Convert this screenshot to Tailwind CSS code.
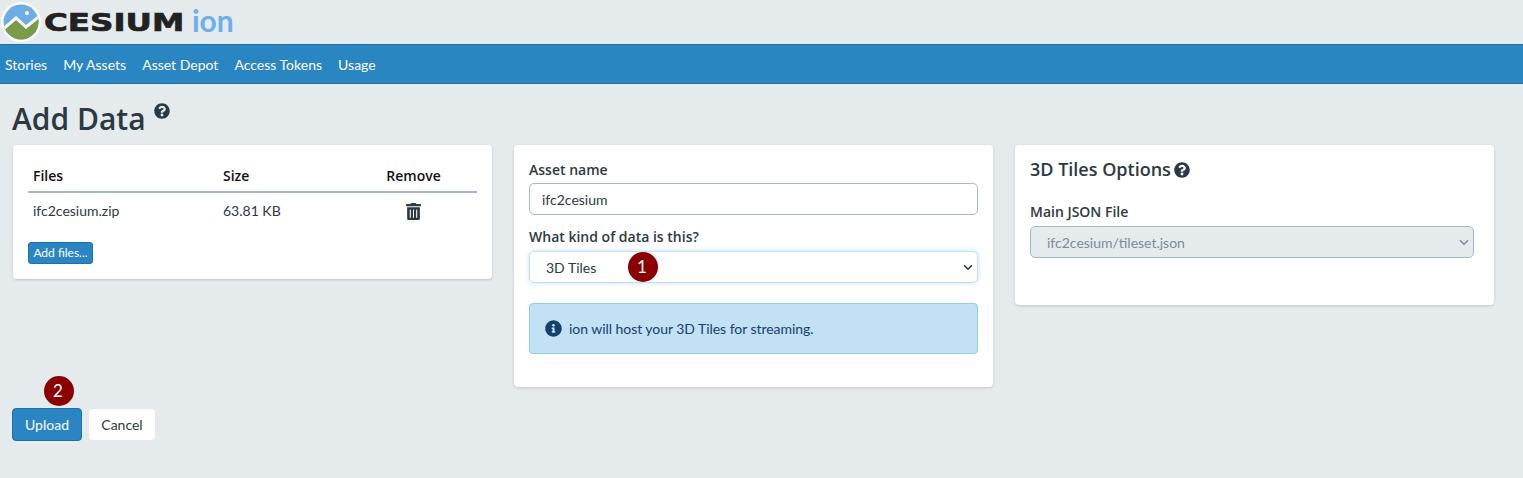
<!DOCTYPE html>
<html lang="en">
<head>
  <meta charset="UTF-8" />
  <title>Cesium ion - Add Data</title>
  <script src="https://cdn.jsdelivr.net/npm/@tailwindcss/browser@4"></script>
</head>
<body class="bg-[#e5eaed] h-[478px] overflow-hidden font-['Lato',sans-serif] text-[14px] text-[#2b3942]">
  <!-- logo -->
  <header class="h-[44px] flex items-center pl-[1px]">
    <svg class="w-[40px] h-[40px] shrink-0" viewBox="0 0 40 40">
      <defs><clipPath id="globe"><circle cx="20" cy="20" r="17.5" /></clipPath></defs>
      <circle cx="20" cy="20" r="20" fill="#fff" />
      <g clip-path="url(#globe)">
        <rect width="40" height="40" fill="#6cade5" />
        <path d="M0 29 L15 16 L25 25 L40 13 L40 40 L0 40 Z" fill="#7a9c48" />
        <path d="M0 29 L15 16 L25 25 L40 13" fill="none" stroke="#fff" stroke-width="3" />
      </g>
      <circle cx="26" cy="11" r="2" fill="#fff" />
    </svg>
    <span class="ml-[3px] font-['DejaVu_Sans',sans-serif] font-bold text-[25px] leading-none text-[#222] inline-block w-[108px] scale-x-[1.3] origin-left [-webkit-text-stroke:0.7px_#222]">CESIUM</span>
    <span class="ml-[40px] font-['Lato',sans-serif] font-bold text-[30px] leading-none text-[#6cb0ea] -mt-[5px]">ion</span>
  </header>

  <nav class="h-[40px] bg-[#2a85c3] border-y border-[#1f6ea6] flex items-center gap-[16.1px] pl-[5px] text-white">
    <a>Stories</a>
    <a>My Assets</a>
    <a>Asset Depot</a>
    <a>Access Tokens</a>
    <a>Usage</a>
  </nav>

  <main class="px-[12px]">
    <div class="h-[61px] flex items-start pt-[16px]">
      <h1 class="font-['Open_Sans',sans-serif] font-semibold text-[30px] leading-[38px] text-[#2b3942]">Add Data</h1>
      <svg class="w-[16px] h-[16px] ml-[8px] mt-[3px] fill-[#2b3942]" viewBox="0 0 512 512"><path d="M504 256c0 136.997-111.043 248-248 248S8 392.997 8 256C8 119.083 119.043 8 256 8s248 111.083 248 248zM262.655 90c-54.497 0-89.255 22.957-116.549 63.758-3.536 5.286-2.353 12.415 2.715 16.258l34.699 26.31c5.205 3.947 12.621 3.008 16.665-2.122 17.864-22.658 30.113-35.797 57.303-35.797 20.429 0 45.698 13.148 45.698 32.958 0 14.976-12.363 22.667-32.534 33.976C247.128 238.528 216 254.941 216 296v4c0 6.627 5.373 12 12 12h56c6.627 0 12-5.373 12-12v-1.333c0-28.462 83.186-29.647 83.186-106.667 0-58.002-60.165-102-116.531-102zM256 338c-25.365 0-46 20.635-46 46 0 25.364 20.635 46 46 46s46-20.636 46-46c0-25.365-20.635-46-46-46z"/></svg>
    </div>

    <div class="flex gap-[22px] items-start ml-[1px]">
      <!-- files -->
      <div class="w-[479px] shrink-0">
        <section class="h-[134px] bg-white rounded-[4px] shadow-[0_1px_3px_rgba(44,62,80,0.2)] px-[15px] pt-[21px]">
          <div class="flex h-[27px] border-b-[2px] border-[#a9b7c2] font-['Open_Sans',sans-serif] font-semibold text-[14px] leading-[19px] text-[#111]">
            <div class="w-[195px] pl-[5px]">Files</div>
            <div class="w-[127px]">Size</div>
            <div class="flex-1 text-center">Remove</div>
          </div>
          <div class="flex h-[37px] items-center">
            <div class="w-[195px] pl-[5px] -mt-[2px]">ifc2cesium.zip</div>
            <div class="w-[127px] -mt-[2px]">63.81 KB</div>
            <div class="flex-1 flex justify-center">
              <svg class="w-[15px] h-[17px] fill-[#2b3942]" viewBox="0 0 448 512"><path d="M32 464a48 48 0 0 0 48 48h288a48 48 0 0 0 48-48V128H32zm272-256a16 16 0 0 1 32 0v224a16 16 0 0 1-32 0zm-96 0a16 16 0 0 1 32 0v224a16 16 0 0 1-32 0zm-96 0a16 16 0 0 1 32 0v224a16 16 0 0 1-32 0zM432 32H312l-9.4-18.7A24 24 0 0 0 281.1 0H166.8a23.72 23.72 0 0 0-21.4 13.3L136 32H16A16 16 0 0 0 0 48v32a16 16 0 0 0 16 16h416a16 16 0 0 0 16-16V48a16 16 0 0 0-16-16z"/></svg>
            </div>
          </div>
          <button class="mt-[12px] w-[65px] h-[22px] bg-[#2a85c3] border border-[#1f6ea6] rounded-[3px] text-white text-[12px] leading-none">Add files...</button>
        </section>

        <div class="relative mt-[129px] -ml-[1px] flex gap-[7px] items-center">
          <span class="absolute left-[32px] -top-[32px] w-[30px] h-[30px] rounded-full bg-[#8b0000] text-white text-[17px] flex items-center justify-center pr-[2px]">2</span>
          <button class="w-[70px] h-[33px] bg-[#2a85c3] border border-[#1f6ea6] rounded-[4px] text-white">Upload</button>
          <button class="w-[66px] h-[31px] bg-white rounded-[4px] text-[#2b3942]">Cancel</button>
        </div>
      </div>

      <!-- asset form -->
      <section class="w-[479px] shrink-0 h-[242px] bg-white rounded-[4px] shadow-[0_1px_3px_rgba(44,62,80,0.2)] px-[15px] pt-[15px]">
        <label class="block font-['Open_Sans',sans-serif] font-semibold text-[14px] leading-[19px] text-[#2b3942]">Asset name</label>
        <input type="text" value="ifc2cesium" class="block w-[449px] h-[32px] mt-[4px] px-[12px] bg-white border border-[#a9b7c2] rounded-[5px] text-[14px] text-[#2b3942]" />
        <label class="block mt-[12px] font-['Open_Sans',sans-serif] font-semibold text-[14px] leading-[19px] text-[#2b3942]">What kind of data is this?</label>
        <div class="relative mt-[5px] w-[449px]">
          <select class="block w-full h-[32px] pl-[16px] appearance-none bg-white border border-[#bfe0f5] rounded-[5px] shadow-[0_0_5px_rgba(42,133,195,0.25)] text-[14px] text-[#2b3942]">
            <option>3D Tiles</option>
          </select>
          <svg class="absolute right-[5px] top-[13px] w-[10px] h-[7px] pointer-events-none" viewBox="0 0 10 7"><path d="M1 1.2 L5 5.2 L9 1.2" fill="none" stroke="#2b3942" stroke-width="1.6" /></svg>
          <span class="absolute left-[99px] top-[1px] w-[30px] h-[30px] rounded-full bg-[#8b0000] text-white text-[17px] flex items-center justify-center pr-[2px]">1</span>
        </div>
        <div class="mt-[20px] w-[449px] h-[51px] flex items-center pl-[15px] bg-[#c2e1f5] border border-[#8fcdea] rounded-[4px] text-[#14406a]">
          <svg class="w-[17px] h-[17px] mr-[7px] fill-[#14406a]" viewBox="0 0 512 512"><path d="M256 8C119.043 8 8 119.083 8 256c0 136.997 111.043 248 248 248s248-111.003 248-248C504 119.083 392.957 8 256 8zm0 110c23.196 0 42 18.804 42 42s-18.804 42-42 42-42-18.804-42-42 18.804-42 42-42zm56 254c0 6.627-5.373 12-12 12h-88c-6.627 0-12-5.373-12-12v-24c0-6.627 5.373-12 12-12h12v-64h-12c-6.627 0-12-5.373-12-12v-24c0-6.627 5.373-12 12-12h64c6.627 0 12 5.373 12 12v100h12c6.627 0 12 5.373 12 12v24z"/></svg>
          <span class="tracking-[-0.05px]">ion will host your 3D Tiles for streaming.</span>
        </div>
      </section>

      <!-- 3d tiles options -->
      <section class="w-[479px] shrink-0 h-[160px] bg-white rounded-[4px] shadow-[0_1px_3px_rgba(44,62,80,0.2)] px-[15px] pt-[12px]">
        <div class="flex items-center h-[25px]">
          <h2 class="font-['Open_Sans',sans-serif] font-semibold text-[18px] leading-[25px] text-[#2b3942]">3D Tiles Options</h2>
          <svg class="w-[16px] h-[16px] ml-[3px] fill-[#2b3942]" viewBox="0 0 512 512"><path d="M504 256c0 136.997-111.043 248-248 248S8 392.997 8 256C8 119.083 119.043 8 256 8s248 111.083 248 248zM262.655 90c-54.497 0-89.255 22.957-116.549 63.758-3.536 5.286-2.353 12.415 2.715 16.258l34.699 26.31c5.205 3.947 12.621 3.008 16.665-2.122 17.864-22.658 30.113-35.797 57.303-35.797 20.429 0 45.698 13.148 45.698 32.958 0 14.976-12.363 22.667-32.534 33.976C247.128 238.528 216 254.941 216 296v4c0 6.627 5.373 12 12 12h56c6.627 0 12-5.373 12-12v-1.333c0-28.462 83.186-29.647 83.186-106.667 0-58.002-60.165-102-116.531-102zM256 338c-25.365 0-46 20.635-46 46 0 25.364 20.635 46 46 46s46-20.636 46-46c0-25.365-20.635-46-46-46z"/></svg>
        </div>
        <label class="block mt-[20px] font-['Open_Sans',sans-serif] font-semibold text-[14px] leading-[19px] text-[#2b3942]">Main JSON File</label>
        <div class="relative mt-[5px] w-[444px]">
          <select disabled class="block w-full h-[32px] pl-[16px] appearance-none bg-[#e5eaed] border border-[#a9b7c2] rounded-[5px] text-[14px] text-[#7b8a99] opacity-100">
            <option>ifc2cesium/tileset.json</option>
          </select>
          <svg class="absolute right-[5px] top-[13px] w-[10px] h-[7px] pointer-events-none" viewBox="0 0 10 7"><path d="M1 1.2 L5 5.2 L9 1.2" fill="none" stroke="#7b8a99" stroke-width="1.6" /></svg>
        </div>
      </section>
    </div>
  </main>
</body>
</html>
